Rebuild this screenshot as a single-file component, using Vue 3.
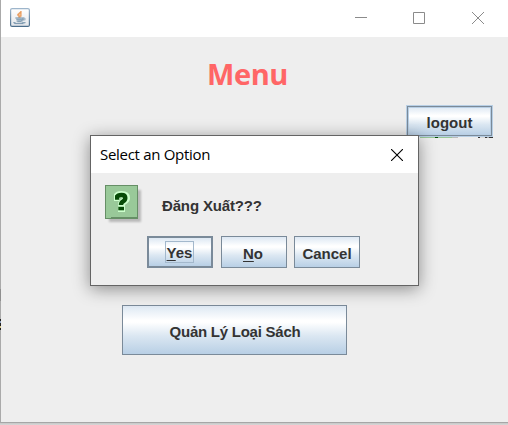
<script setup>
const options = [
  { key: 'Y', rest: 'es', focused: true },
  { key: 'N', rest: 'o' },
  { key: '', rest: 'Cancel' },
]
const cup = [
  '........o.......',
  '.......oo.......',
  '......ooo.......',
  '.....oopo.......',
  '.....oopo.......',
  '......ooo.......',
  '......oo........',
  '...bbbbbbbbb....',
  '....llllllb.b...',
  '....bbbbbbbbc...',
  '.....llllb......',
  '....cbbbbc......',
  '.bb......cbbb...',
  '..bbbbbbbbbc....',
]
const inks = { o: '#e5812f', p: '#f5c49a', b: '#5f829e', c: '#aabdca', l: '#8ea8bb' }
const dots = cup.flatMap((row, y) =>
  [...row].map((c, x) => ({ x, y, fill: inks[c] })).filter((d) => d.fill),
)
</script>

<template>
  <div class="desktop">
    <div class="window">
      <header class="titlebar">
        <svg class="java" width="20" height="19" viewBox="0 0 20 19">
          <defs>
            <linearGradient id="edge" x1="0" y1="0" x2="0" y2="1">
              <stop offset="0" stop-color="#9db5cb" />
              <stop offset="1" stop-color="#4c6e8b" />
            </linearGradient>
            <linearGradient id="face" x1="0" y1="0" x2="0" y2="1">
              <stop offset="0" stop-color="#fff" />
              <stop offset="1" stop-color="#e3e6ea" />
            </linearGradient>
          </defs>
          <rect x="0.6" y="0.6" width="18.8" height="17.8" rx="1.5" fill="url(#face)" stroke="url(#edge)" stroke-width="1.2" />
          <g transform="translate(2.4 3)">
            <rect v-for="d in dots" :key="`${d.x}-${d.y}`" :x="d.x" :y="d.y * 0.93" width="1.05" height="1" :fill="d.fill" />
          </g>
        </svg>
        <div class="controls">
          <svg width="12" height="12"><path d="M0 5.5H12" /></svg>
          <svg width="12" height="12"><path d="M.5 .5h11v11H.5z" /></svg>
          <svg width="12" height="12"><path d="M0 0L12 12M12 0L0 12" /></svg>
        </div>
      </header>
      <main class="content">
        <h1>Menu</h1>
        <button class="swing logout">logout</button>
        <div class="residue"></div>
        <button class="swing books">Quản Lý Loại Sách</button>
      </main>
    </div>
    <div class="edge-specks"></div>

    <section class="dialog">
      <header class="dialog-title">
        <span>Select an Option</span>
        <svg width="12" height="12"><path d="M0 0L12 12M12 0L0 12" /></svg>
      </header>
      <div class="message">
        <svg class="question" width="38" height="39" viewBox="0 0 38 39">
          <defs>
            <filter id="soft" x="-20%" y="-20%" width="140%" height="140%"><feGaussianBlur stdDeviation="1.3" /></filter>
          </defs>
          <rect x="4" y="5" width="32" height="32" fill="#000" opacity=".22" filter="url(#soft)" />
          <rect x=".5" y=".5" width="32" height="33" fill="#99c999" stroke="#668f66" />
          <path d="M6 32.5H32.5" stroke="#668f66" stroke-width="1" />
          <g fill="none">
            <path d="M9 12.5H14M12 11Q13 9.5 16.5 9.5Q21.5 9.5 21.5 13Q21.5 15 18.5 16.5Q16.5 17.5 16.5 20M13 23.5H20" stroke="#ccffcc" stroke-width="7" />
            <path d="M10 12.5H14M12 12Q13 10 16.5 10Q20.3 10 20.3 13Q20.3 15 18 16.5Q16 17.5 16 20" stroke="#064b06" stroke-width="4.4" />
            <path d="M13.3 23.5H19" stroke="#064b06" stroke-width="3.6" />
            <path d="M14 20.9H19" stroke="#ccffcc" stroke-width="1" />
          </g>
        </svg>
        <p>Đăng Xuất???</p>
      </div>
      <div class="options">
        <button v-for="o in options" :key="o.rest" class="swing" :class="{ primary: o.focused }">
          <span class="caption"><u v-if="o.key">{{ o.key }}</u>{{ o.rest }}</span>
        </button>
      </div>
    </section>
  </div>
</template>

<style>
body { margin: 0; overflow: hidden; }
</style>

<style scoped>
.desktop {
  position: relative;
  width: 508px;
  height: 425px;
  overflow: hidden;
  background: linear-gradient(#bdbdbd 423px, #c6c6c6 423px, #d8d8d8);
  font-family: "Liberation Sans", Arial, sans-serif;
}
.window {
  box-sizing: border-box;
  height: 423px;
  border-left: 1px solid #aaa;
  border-bottom: 1px solid #a6a6a6;
  background: #eee;
}
.titlebar {
  display: flex;
  justify-content: space-between;
  align-items: flex-start;
  box-sizing: border-box;
  height: 37px;
  padding: 8px 24px 0 9px;
  background: #fff;
}
.java { display: block; }
.controls { display: flex; gap: 47px; padding-top: 4px; }
.controls svg { display: block; fill: none; stroke: #8b8b8b; }
.controls svg:first-child { margin-right: -1px; position: relative; left: 1px; }
.controls svg:first-child + svg { margin-left: 1px; }
.content { display: flex; flex-direction: column; }
h1 {
  margin: 17px 0 0 206px;
  font: 700 29px/40px "Open Sans", "Noto Sans", sans-serif;
  letter-spacing: -0.4px;
  color: #f66;
}
.swing {
  display: flex;
  align-items: center;
  justify-content: center;
  box-sizing: border-box;
  padding: 0;
  border: 1px solid #7a8a99;
  background: linear-gradient(#dde8f3, #fff 30%, #fff 34%, #dbe7f2 62%, #b8cfe5);
  color: #333;
  font: 700 15px/18px "Liberation Sans", Arial, sans-serif;
  white-space: nowrap;
}
.logout {
  align-self: flex-end;
  width: 85px;
  height: 30px;
  margin: 12px 16px 0 0;
  padding-top: 3px;
  box-shadow: 0 0 0 1px #b8cfe5, inset 0 0 0 1px #b8cfe5;
}
.residue {
  align-self: flex-end;
  width: 73px;
  height: 1px;
  margin: 1px 15px 0 0;
  background: linear-gradient(90deg, #99c999 15px, #064b06 15px 18px, #99c999 18px 32px, #bbb 32px 38px, #eee 38px 58px, #333 58px 60px, #ddd 60px 65px, #333 65px 67px, #aaa 67px 69px, #333 69px);
}
.books { width: 225px; height: 50px; margin: 167px 0 0 121px; padding: 3px 0 0 1px; letter-spacing: -0.25px; }
.edge-specks {
  position: absolute;
  left: 0;
  top: 289px;
  width: 1px;
  height: 41px;
  background: linear-gradient(#8f8f8f 12px, #aaa 12px 30px, #222 30px 32px, #8fa2c0 32px 34px, #222 34px 37px, #d8c98a 37px 39px, #222 39px);
}
.dialog {
  position: absolute;
  left: 90px;
  top: 135px;
  box-sizing: border-box;
  width: 329px;
  height: 151px;
  border: 1px solid #646464;
  background: #eee;
  box-shadow: 0 3px 16px rgba(0, 0, 0, 0.42);
}
.dialog-title {
  display: flex;
  align-items: center;
  justify-content: space-between;
  height: 37px;
  padding: 0 15px 0 9px;
  background: #fff;
  font: 15px/20px "Open Sans", "Noto Sans", sans-serif;
  letter-spacing: -0.3px;
  color: #000;
}
.dialog-title span { margin-top: -1px; }
.dialog-title svg { fill: none; stroke: #000; stroke-width: 1.1; }
.message { display: flex; padding: 12px 0 0 14px; }
.message p { margin: 12px 0 0 19px; font-size: 15px; font-weight: 700; line-height: 18px; letter-spacing: -0.15px; color: #333; }
.options { display: flex; gap: 8px; padding: 12px 0 0 56px; }
.options .swing { width: 66px; height: 32px; padding-top: 3px; }
.options .swing + .swing { padding-right: 2px; }
.options .swing + .swing + .swing { margin-left: -1px; padding-right: 0; }
.options .primary { border-width: 2px; padding: 0 1px 0 0; }
.caption u { text-decoration-thickness: 1px; text-underline-offset: 2px; }
.primary .caption { outline: 1px solid #a3b8cc; padding: 2px 1px 0; }
</style>
